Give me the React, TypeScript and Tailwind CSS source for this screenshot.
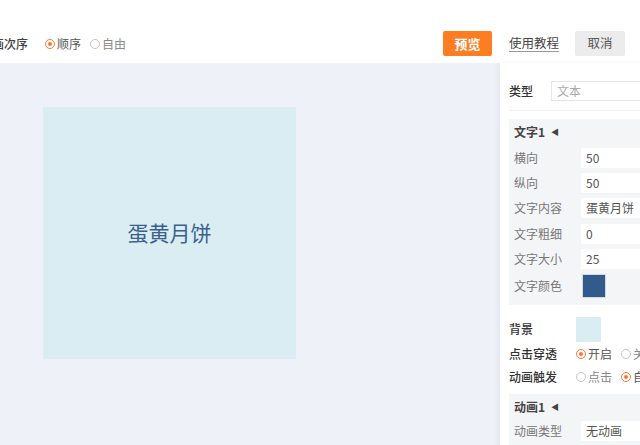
import React from 'react';

const font = { fontFamily: '"Noto Sans CJK SC", "Noto Sans", sans-serif' };

function Radio({ checked, label }: { checked: boolean; label: string }) {
    return (
        <label className="flex items-center gap-[2px] whitespace-nowrap">
            {checked ? (
                <span className="flex h-[10px] w-[10px] items-center justify-center rounded-full border-[1.5px] border-[#f7783a]">
                    <span className="h-[4px] w-[4px] rounded-full bg-[#f7783a]" />
                </span>
            ) : (
                <span className="h-[10px] w-[10px] rounded-full border border-[#c4c4c4]" />
            )}
            <span className={checked ? 'text-[#555]' : 'text-[#888]'}>{label}</span>
        </label>
    );
}

function FieldRow({ label, value, h = 'h-[25.4px]' }: { label: string; value: string; h?: string }) {
    return (
        <div className={`flex items-center ${h}`}>
            <span className="w-[67px] shrink-0 text-[#777]">{label}</span>
            <div className="flex h-[20px] w-[150px] items-center bg-white px-[5px] text-[#555]">{value}</div>
        </div>
    );
}

export default function App() {
    return (
        <div className="flex h-[445px] w-[640px] flex-col overflow-hidden bg-white text-[12px]" style={font}>
            {/* top bar */}
            <div className="flex h-[63px] shrink-0 items-start pt-[31px]">
                <div className="ml-[-20px] flex h-[25px] items-center text-[#444]">
                    <span className="font-medium">动画次序</span>
                    <div className="ml-[17px] flex items-center gap-[9px]">
                        <Radio checked label="顺序" />
                        <Radio checked={false} label="自由" />
                    </div>
                </div>
                <div className="ml-auto mr-[15px] flex h-[25px] items-center">
                    <button className="h-[25px] w-[49px] rounded-[2px] bg-[#fd7d22] text-[13px] font-bold text-white">预览</button>
                    <button className="ml-[17px] text-[12.5px] text-[#444] underline decoration-[#999] underline-offset-[3px]">使用教程</button>
                    <button className="ml-[16px] h-[25px] w-[50px] rounded-[2px] bg-[#ececec] text-[12.5px] text-[#555]">取消</button>
                </div>
            </div>

            <div className="flex flex-1">
                {/* canvas */}
                <div className="w-[499px] shrink-0 bg-[#eef1f8] pl-[43px] pt-[44px]">
                    <div className="flex h-[252px] w-[253px] items-center justify-center bg-[#daedf2] pb-[1px] text-[21px] text-[#3a6090]">
                        蛋黄月饼
                    </div>
                </div>

                {/* property panel */}
                <div className="w-[260px] shrink-0 border-l border-[#e6e8ee] bg-white pl-[9px] pt-[18px] shadow-[-2px_0_4px_rgba(0,0,0,0.04)]">
                    <div className="flex h-[20px] items-center">
                        <span className="w-[42px] font-medium text-[#333]">类型</span>
                        <div className="flex h-[20px] w-[150px] items-center border border-[#e6e6e6] px-[5px] text-[#aaa]">文本</div>
                    </div>
                    <div className="mt-[9px] border-t border-[#f0f0f0]" />

                    <div className="mt-[8px] bg-[#f4f5f7] px-[5px] pb-[5px]">
                        <div className="flex h-[26px] items-center font-semibold text-[#444]">
                            文字1<span className="ml-[6px] text-[8px] font-normal">◀</span>
                        </div>
                        <FieldRow label="横向" value="50" />
                        <FieldRow label="纵向" value="50" />
                        <FieldRow label="文字内容" value="蛋黄月饼" />
                        <FieldRow label="文字粗细" value="0" />
                        <FieldRow label="文字大小" value="25" />
                        <div className="flex h-[28px] items-center">
                            <span className="w-[68px] shrink-0 text-[#777]">文字颜色</span>
                            <div className="h-[24px] w-[24px] border border-[#d8d8d8] bg-[#315b8c]" />
                        </div>
                    </div>

                    <div className="mt-[12px] flex h-[25px] items-center">
                        <span className="w-[67px] font-medium text-[#333]">背景</span>
                        <div className="h-[25px] w-[25px] bg-[#daedf2]" />
                    </div>
                    <div className="flex h-[24px] items-center">
                        <span className="w-[67px] font-medium text-[#333]">点击穿透</span>
                        <div className="flex items-center gap-[9px]">
                            <Radio checked label="开启" />
                            <Radio checked={false} label="关闭" />
                        </div>
                    </div>
                    <div className="flex h-[22px] items-center">
                        <span className="w-[67px] font-medium text-[#333]">动画触发</span>
                        <div className="flex items-center gap-[9px]">
                            <Radio checked={false} label="点击" />
                            <Radio checked label="自动" />
                        </div>
                    </div>

                    <div className="mt-[6px] bg-[#f4f5f7] px-[5px] pb-[7px]">
                        <div className="flex h-[26px] items-center font-semibold text-[#444]">
                            动画1<span className="ml-[6px] text-[8px] font-normal">◀</span>
                        </div>
                        <FieldRow label="动画类型" value="无动画" h="h-[22px]" />
                    </div>
                </div>
            </div>
        </div>
    );
}
